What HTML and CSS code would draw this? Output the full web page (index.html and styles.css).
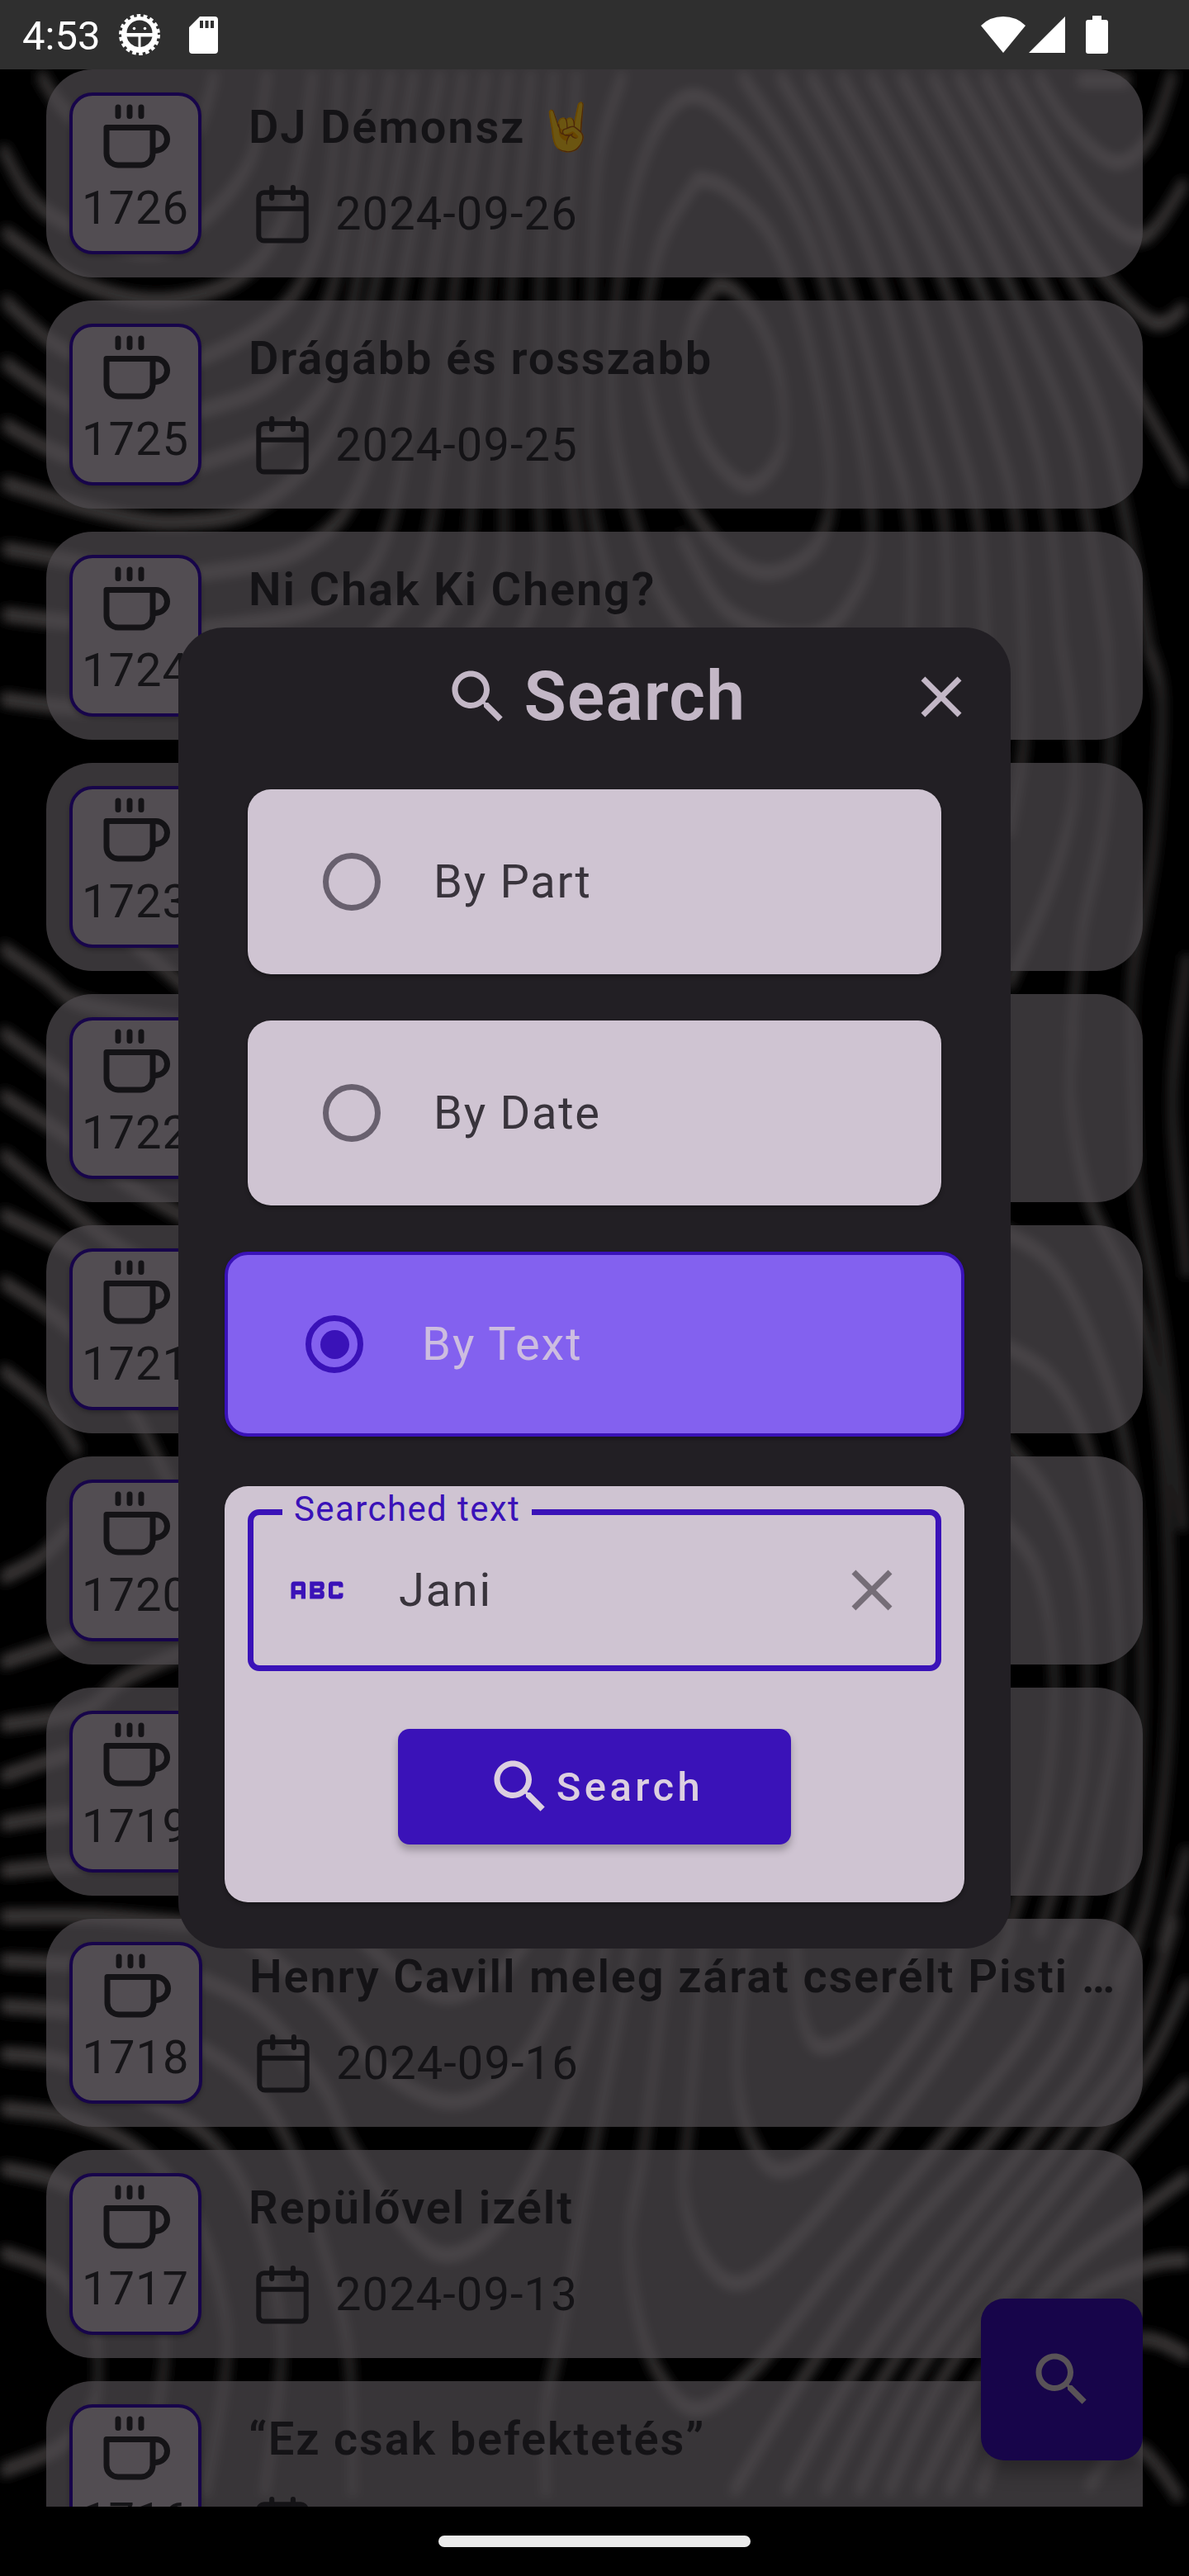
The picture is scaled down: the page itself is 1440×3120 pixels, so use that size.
FILE: index.html
```html
<!DOCTYPE html>
<html lang="hu">
<head>
<meta charset="utf-8">
<title>Search</title>
<link rel="stylesheet" href="styles.css">
</head>
<body>
<svg class="defs" width="0" height="0">
  <symbol id="cup" viewBox="0 0 24 24"><path d="M18 9h1a4 4 0 0 1 0 8h-1M2 9h16v9a4 4 0 0 1-4 4H6a4 4 0 0 1-4-4V9zM6 2v3M10 2v3M14 2v3" fill="none" stroke="currentColor" stroke-width="2" stroke-linecap="round" stroke-linejoin="round"/></symbol>
  <symbol id="calendar" viewBox="0 0 24 24"><rect x="3.8" y="4.6" width="16.4" height="16.7" rx="1.9" fill="none" stroke="currentColor" stroke-width="1.7"/><path d="M4 10.2h16M8.35 2.9v3.7M15.7 2.9v3.7" fill="none" stroke="currentColor" stroke-width="1.75" stroke-linecap="round"/></symbol>
  <symbol id="search" viewBox="0 0 24 24"><path fill="currentColor" d="M15.5 14h-.79l-.28-.27C15.41 12.59 16 11.11 16 9.5 16 5.91 13.09 3 9.5 3S3 5.91 3 9.5 5.91 16 9.5 16c1.61 0 3.09-.59 4.23-1.57l.27.28v.79l5 4.99L20.49 19l-4.99-5zm-6 0C7.01 14 5 11.99 5 9.5S7.01 5 9.5 5 14 7.01 14 9.5 11.99 14 9.5 14z"/></symbol>
  <symbol id="close" viewBox="0 0 24 24"><path fill="currentColor" d="M19 6.41L17.59 5 12 10.59 6.41 5 5 6.41 10.59 12 5 17.59 6.41 19 12 13.41 17.59 19 19 17.59 13.41 12z"/></symbol>
  <symbol id="abc" viewBox="0 0 24 24"><path fill="currentColor" fill-rule="evenodd" d="M21 11h-1.5v-.5h-2v3h2V13H21v1c0 .55-.45 1-1 1h-3c-.55 0-1-.45-1-1v-4c0-.55.45-1 1-1h3c.55 0 1 .45 1 1v1zM8 10v5H6.5v-1.5h-2V15H3v-5c0-.55.45-1 1-1h3c.55 0 1 .45 1 1zm-1.500.5h-2V12h2v-1.500zm7 1.500c.55 0 1 .45 1 1v1c0 .55-.45 1-1 1h-4V9h4c.55 0 1 .45 1 1v1c0 .55-.45 1-1 1zM11 10.500v.75h2v-.75h-2zm2 2.250h-2v.75h2v-.75z"/></symbol>
</svg>

<div class="screen">
  <svg class="contours" viewBox="0 0 1440 3120">
    <defs><filter id="soft" filterUnits="userSpaceOnUse" x="-40" y="40" width="1520" height="3040"><feMorphology operator="dilate" radius="0 6"/><feGaussianBlur stdDeviation="6.5 5.5"/></filter></defs>
    <g id="lines" filter="url(#soft)"></g>
  </svg>

  <header class="status">
    <span class="clock">4:53</span>
    <svg class="bug" viewBox="0 0 50 50"><circle cx="25" cy="25" r="22.500" fill="none" stroke="#fff" stroke-width="5" stroke-dasharray="4.500 3.354"/><path fill="#fff" fill-rule="evenodd" d="M25 3a22 22 0 1 0 0 44a22 22 0 0 0 0-44zM9.500 23a15.500 15.500 0 0 1 31 0zM9.500 27.500h14V40a15.500 15.500 0 0 1-14-12.500zM26.500 27.500h14a15.500 15.500 0 0 1-14 12.500z"/><circle cx="18.500" cy="17.500" r="1.800" fill="#fff"/><circle cx="31.500" cy="17.500" r="1.800" fill="#fff"/></svg>
    <svg class="sd" viewBox="0 0 35 45"><path fill="#fff" fill-rule="evenodd" d="M13 0h18a4 4 0 0 1 4 4v37a4 4 0 0 1-4 4H4a4 4 0 0 1-4-4V13zM13 5v9h4V5zM19.500 5v9h4V5zM26 5v9h4V5z"/></svg>
    <svg class="wifi" viewBox="0 0 54 44"><path fill="#fff" d="M27 44L0 11Q11 0 27 0T54 11z"/></svg>
    <svg class="signal" viewBox="0 0 44 44"><path fill="#fff" d="M44 0v44H0z"/></svg>
    <svg class="battery" viewBox="0 0 27 46"><path fill="#fff" d="M8 0h11v5h5a3 3 0 0 1 3 3v35a3 3 0 0 1-3 3H3a3 3 0 0 1-3-3V8a3 3 0 0 1 3-3h5z"/></svg>
  </header>

  <main class="list">
    <article class="card"><div class="badge"><svg><use href="#cup"/></svg><span>1726</span></div><div class="info"><h2>DJ Démonsz <span class="emoji">🤘</span></h2><p><svg><use href="#calendar"/></svg>2024-09-26</p></div></article>
    <article class="card"><div class="badge"><svg><use href="#cup"/></svg><span>1725</span></div><div class="info"><h2>Drágább és rosszabb</h2><p><svg><use href="#calendar"/></svg>2024-09-25</p></div></article>
    <article class="card"><div class="badge"><svg><use href="#cup"/></svg><span>1724</span></div><div class="info"><h2>Ni Chak Ki Cheng?</h2></div></article>
    <article class="card"><div class="badge"><svg><use href="#cup"/></svg><span>1723</span></div></article>
    <article class="card"><div class="badge"><svg><use href="#cup"/></svg><span>1722</span></div></article>
    <article class="card"><div class="badge"><svg><use href="#cup"/></svg><span>1721</span></div></article>
    <article class="card"><div class="badge"><svg><use href="#cup"/></svg><span>1720</span></div></article>
    <article class="card"><div class="badge"><svg><use href="#cup"/></svg><span>1719</span></div></article>
    <article class="card"><div class="badge wide"><svg><use href="#cup"/></svg><span>1718</span></div><div class="info"><h2>Henry Cavill meleg zárat cserélt Pisti …</h2><p><svg><use href="#calendar"/></svg>2024-09-16</p></div></article>
    <article class="card"><div class="badge"><svg><use href="#cup"/></svg><span>1717</span></div><div class="info"><h2>Repülővel izélt</h2><p><svg><use href="#calendar"/></svg>2024-09-13</p></div></article>
    <article class="card"><div class="badge"><svg><use href="#cup"/></svg><span>1716</span></div><div class="info"><h2>“Ez csak befektetés”</h2><p><svg><use href="#calendar"/></svg></p></div></article>
  </main>

  <button class="fab"><svg><use href="#search"/></svg></button>

  <footer class="nav"><i></i></footer>

  <section class="dialog">
    <div class="head"><i></i><h1><svg><use href="#search"/></svg>Search</h1><svg><use href="#close"/></svg></div>
    <div class="option"><i class="radio"></i>By Part</div>
    <div class="option"><i class="radio"></i>By Date</div>
    <div class="option selected"><i class="radio"></i>By Text</div>
    <div class="panel">
      <div class="field"><span class="label">Searched text</span><svg class="abc"><use href="#abc"/></svg><span class="value">Jani</span><svg class="clear"><use href="#close"/></svg></div>
      <button class="submit"><svg><use href="#search"/></svg>Search</button>
    </div>
  </section>
</div>
<script src="contours.js"></script>
</body>
</html>
```
FILE: styles.css
```css
* { box-sizing: border-box; margin: 0; padding: 0; }
body { background: #000; font-family: Roboto, "Liberation Sans", sans-serif; }
.defs { position: absolute; }
svg { display: block; flex: none; }
button { border: 0; font: inherit; }

.screen { position: relative; width: 1440px; height: 3120px; overflow: hidden; background: #000; display: flex; flex-direction: column; }
.contours { position: absolute; inset: 0; width: 1440px; height: 3120px; }
.contours path { fill: none; stroke: #343333; stroke-width: 8; stroke-linecap: round; }

.status { position: relative; height: 84px; flex: none; background: #2f2f2f; display: flex; align-items: center; padding: 0 98px 0 27px; }
.clock { font-size: 49px; line-height: 84px; color: #fff; width: 117px; padding-top: 3px; }
.bug { width: 50px; height: 50px; }
.sd { width: 35px; height: 45px; margin-left: 35px; }
.wifi { width: 54px; height: 44px; margin-left: auto; }
.signal { width: 44px; height: 44px; margin-left: 4px; }
.battery { width: 27px; height: 46px; margin-left: 25px; }

.list { position: relative; height: 2952px; flex: none; overflow: hidden; padding: 0 56px; display: flex; flex-direction: column; gap: 28px; }
.card { height: 252px; flex: none; border-radius: 56px; background: rgba(80, 76, 80, .7); padding: 28px; display: flex; gap: 56px; color: #141316; }
.badge { width: 160px; height: 196px; flex: none; border: 4px solid #17054a; border-radius: 28px; background: #524d52; padding-top: 6.5px; display: flex; flex-direction: column; align-items: center; gap: 3px; box-shadow: 0 3px 5px rgba(0, 0, 0, .25); }
.badge.wide { width: 161px; }
.badge svg, .info svg { width: 84px; height: 84px; }
.badge span { font-size: 56px; line-height: 84px; letter-spacing: 1px; color: #151417; }
.info { display: flex; flex-direction: column; gap: 21px; min-width: 0; white-space: nowrap; }
.info h2 { font-size: 56px; line-height: 84px; height: 84px; font-weight: 600; letter-spacing: 1.82px; padding-left: 1px; }
.info p { font-size: 56px; line-height: 84px; letter-spacing: 1.1px; display: flex; gap: 22px; }
.emoji { filter: brightness(.42); font-family: "Noto Color Emoji", Roboto, sans-serif; }

.fab { position: absolute; left: 1188px; top: 2784px; width: 196px; height: 196px; border-radius: 28px; background: #17054a; color: #595357; display: grid; place-items: center; box-shadow: 0 12px 24px rgba(0, 0, 0, .3); }
.fab svg { width: 84px; height: 84px; }

.nav { position: relative; height: 84px; flex: none; background: #000; display: grid; place-items: center; }
.nav i { width: 378px; height: 14px; border-radius: 7px; background: #ebebeb; }

.dialog { position: absolute; left: 216px; top: 760px; width: 1008px; height: 1600px; border-radius: 56px; background: #221f24; display: flex; flex-direction: column; align-items: center; }
.head { width: 100%; height: 168px; margin-bottom: 28px; padding: 0 42px; display: grid; grid-template-columns: 84px 1fr 84px; align-items: center; color: #c3b7c6; }
.head svg { width: 84px; height: 84px; }
.head h1 { display: flex; justify-content: center; align-items: center; gap: 14px; font-size: 84px; line-height: 112px; font-weight: 600; letter-spacing: 1.2px; }
.option { width: 840px; height: 224px; margin-bottom: 56px; border-radius: 28px; background: #cfc4d2; color: #39343c; display: flex; align-items: center; gap: 64px; padding-left: 91px; font-size: 56px; letter-spacing: 1.75px; box-shadow: 0 3px 5px rgba(0, 0, 0, .3); }
.radio { width: 70px; height: 70px; border: 7px solid #68606e; border-radius: 50%; display: grid; place-items: center; }
.selected { width: 896px; margin-bottom: 60px; border: 4px solid #3a12b8; background: #8361ef; color: #cdbde0; padding-left: 94px; gap: 71px; letter-spacing: 2px; }
.selected .radio { border-color: #3a12b8; }
.selected .radio::after { content: ""; width: 35px; height: 35px; border-radius: 50%; background: #3a12b8; }

.panel { width: 896px; height: 504px; border-radius: 28px; background: #cfc4d2; padding: 28px; display: flex; flex-direction: column; align-items: center; gap: 70px; box-shadow: 0 3px 5px rgba(0, 0, 0, .3); }
.field { position: relative; width: 840px; height: 196px; border: 7px solid #3a12b8; border-radius: 14px; padding: 0 35px; display: flex; align-items: center; }
.field svg { width: 84px; height: 84px; }
.label { position: absolute; left: 35px; top: -32px; padding: 0 14px; background: #cfc4d2; color: #3a12b8; font-size: 42px; line-height: 49px; letter-spacing: 1.4px; white-space: nowrap; }
.abc { color: #3a12b8; }
.value { margin-left: 57px; font-size: 56px; letter-spacing: 1.75px; color: #39343c; flex: 1; }
.clear { color: #756d77; }
.submit { width: 476px; height: 140px; border-radius: 14px; background: #3a12b8; color: #dccfe0; display: flex; align-items: center; justify-content: center; gap: 2px; font-size: 49px; font-weight: 500; letter-spacing: 4.4px; box-shadow: 0 7px 10px rgba(0, 0, 0, .25); }
.submit svg { width: 84px; height: 84px; }
```
FILE: contours.js
```js
// Topographic wallpaper: each entry is a flat list x1,y1,x2,y2... of points a smooth line runs through.
const fields = [
  { sx: 0.9184, sy: 0.4401, dy: 80, lines: [
    [55,25, 90,130, 175,260, 250,190, 270,120, 282,25],
    [5,235, 60,400, 190,510, 265,430, 330,260, 352,25],
    [8,460, 100,590, 205,645, 310,590, 370,440, 400,200, 412,25],
    [8,650, 80,775, 170,830, 270,800, 380,650, 430,400, 447,25],
    [8,820, 90,930, 180,965, 270,945, 370,850, 440,600, 480,25],
    [8,990, 90,1075, 190,1110, 280,1085, 400,960, 460,700, 515,25],
    [8,1150, 130,1225, 230,1255, 340,1210, 440,1000, 495,600, 545,25],
    [8,1330, 90,1360, 190,1400, 270,1395, 400,1330, 480,1120, 530,600, 580,25],
    [8,1510, 90,1530, 200,1550, 300,1540, 430,1480, 510,1290, 560,700, 610,25],
    [480,1600, 550,1400, 580,1100, 600,600, 640,25],
    [550,1600, 610,1400, 625,1100, 640,600, 670,25],
    [610,1600, 660,1400, 665,1100, 675,600, 700,25],
    [680,1600, 712,1400, 710,1100, 712,600, 730,25],
    [750,1600, 770,1450, 750,1100, 745,600, 760,25],
    [830,1600, 800,1400, 775,1100, 780,600, 790,250, 820,25],
    [920,1600, 860,1400, 810,1000, 815,600, 850,250, 905,85, 970,160, 1050,400, 1100,700, 1150,1250, 1120,1480, 1060,1570, 960,1500, 900,1300],
    [920,310, 870,500, 850,800, 880,1080, 940,1300, 1010,1395, 1080,1310, 1095,1100, 1065,750, 1020,480, 960,340, 920,310],
    [945,600, 915,700, 905,850, 930,1040, 985,1155, 1030,1060, 1030,880, 1005,720, 970,620, 945,600],
    [980,25, 1060,300, 1120,620, 1170,1000, 1200,1250, 1200,1600],
    [1030,25, 1110,330, 1165,620, 1215,1000, 1245,1250, 1250,1600],
    [1070,25, 1150,340, 1205,620, 1260,1000, 1290,1250, 1300,1600],
    [1110,25, 1190,340, 1250,620, 1310,1000, 1340,1250, 1350,1600],
    [1150,25, 1230,340, 1295,620, 1360,1000, 1385,1250, 1400,1600],
    [1190,25, 1270,340, 1335,620, 1410,1000, 1435,1250, 1460,1600],
    [1230,25, 1310,340, 1380,620, 1450,950, 1485,1250, 1515,1600],
    [1265,25, 1340,310, 1430,640, 1500,900, 1562,1130],
    [1300,25, 1370,300, 1450,560, 1520,705, 1560,670],
    [1335,25, 1400,260, 1460,420, 1510,470, 1560,330],
    [1370,25, 1410,160, 1470,265, 1515,200, 1545,25],
    [1425,40, 1485,40]
  ]},
  { sx: 1, sy: 1, dy: 0, lines: [
    [5,847, 110,858, 260,850],
    [5,1150, 55,1185, 100,1216, 230,1240],
    [160,1140, 230,1200],
    [5,1252, 83,1307, 150,1350, 240,1370],
    [5,1328, 83,1378, 150,1431, 230,1478],
    [5,1400, 67,1450, 133,1503, 230,1560],
    [5,1472, 83,1512, 150,1560, 240,1600],
    [5,1554, 83,1608, 150,1690, 193,1771, 230,1850],
    [5,1661, 57,1704, 93,1756],
    [5,1910, 50,1886, 85,1850],
    [5,2013, 83,1986, 150,1950, 230,1890],
    [5,2089, 100,2072, 150,2034, 230,1998],
    [5,2151, 83,2125, 230,2080],
    [5,2209, 83,2197, 240,2180],
    [5,2266, 83,2259, 240,2250],
    [5,2321, 110,2321, 230,2330],
    [5,2375, 83,2378, 180,2382, 248,2399, 321,2441, 390,2525, 427,2603, 496,2703, 546,2731, 606,2692, 661,2593, 710,2457, 735,2330],
    [5,2430, 83,2436, 170,2452, 248,2483, 312,2535, 358,2614, 390,2718, 422,2849, 427,3015],
    [5,2488, 83,2499, 193,2551, 257,2593, 303,2666, 335,2780, 340,2870, 321,3015],
    [5,2554, 92,2567, 174,2609, 239,2692, 271,2797, 273,2875, 250,3015],
    [5,2627, 83,2648, 150,2710, 190,2790, 199,2860, 180,2980],
    [5,2729, 69,2755, 110,2810, 119,2870, 110,2920, 70,2965, 5,2992],
    [290,2340, 386,2420, 459,2504, 546,2546, 620,2509, 680,2405, 700,2330],
    [430,2340, 490,2395, 546,2418, 610,2385, 650,2330],
    [661,3015, 661,2920, 680,2823, 707,2666, 735,2520, 770,2340],
    [812,2340, 780,2600, 763,2700, 770,2790, 795,2870, 844,2918, 917,2865, 1018,2739, 1133,2603, 1248,2457, 1294,2340],
    [853,2340, 835,2562, 828,2656, 853,2734, 899,2765, 972,2703, 1087,2562, 1179,2431, 1225,2340],
    [904,2340, 893,2509, 913,2598, 950,2629, 1018,2582, 1133,2431, 1165,2340],
    [963,2340, 972,2445, 1000,2480, 1064,2436, 1119,2340],
    [890,3015, 973,2880, 1087,2718, 1200,2590, 1290,2470, 1340,2340],
    [954,3015, 1030,2880, 1130,2740, 1250,2590, 1330,2480, 1380,2340],
    [1000,3015, 1070,2880, 1170,2740, 1290,2590, 1370,2480, 1422,2330],
    [1041,3015, 1110,2875, 1210,2740, 1320,2600, 1390,2500, 1437,2405],
    [1078,3015, 1145,2875, 1250,2740, 1360,2610, 1437,2525],
    [1115,3015, 1180,2890, 1280,2760, 1380,2680, 1437,2638],
    [1150,3015, 1210,2900, 1300,2790, 1386,2745, 1437,2737],
    [1188,3015, 1230,2920, 1310,2850, 1386,2833, 1437,2852],
    [1320,3010, 1350,2970, 1386,2970, 1427,3022],
    [1391,784, 1407,850, 1400,1000, 1387,1094, 1370,1208, 1375,1400, 1380,1461, 1410,1633, 1432,1845],
    [1223,1190, 1273,1071, 1300,967, 1298,870, 1286,784],
    [1223,1005, 1240,900, 1240,784],
    [1300,1250, 1297,1335, 1320,1455, 1370,1560, 1400,1680, 1415,1863, 1415,2100, 1390,2300, 1350,2400],
    [1341,784, 1345,900, 1335,1010, 1310,1130, 1298,1250],
    [1437,1165, 1420,1335, 1437,1538],
    [1437,2245, 1407,2357],
    [1200,1485, 1273,1530, 1327,1633, 1370,1790, 1383,2035, 1370,2240, 1330,2400],
    [1200,1622, 1273,1668, 1320,1760, 1350,1920, 1350,2100, 1300,2340],
    [1200,1730, 1273,1817, 1313,1943, 1310,2150, 1260,2340],
    [1200,1830, 1255,1900, 1277,2035, 1262,2200, 1220,2340]
  ]}
];

const NS = "http://www.w3.org/2000/svg";
const layer = document.getElementById("lines");
for (const f of fields) {
  for (const flat of f.lines) {
    const p = [];
    for (let i = 0; i < flat.length; i += 2) p.push([flat[i] * f.sx, Math.max(94, flat[i + 1] * f.sy + f.dy)]);
    let d = `M${p[0]}`;
    for (let i = 0; i < p.length - 1; i++) {
      const a = p[i - 1] || p[i], b = p[i], c = p[i + 1], e = p[i + 2] || c;
      d += `C${b[0] + (c[0] - a[0]) / 6} ${b[1] + (c[1] - a[1]) / 6} ${c[0] - (e[0] - b[0]) / 6} ${c[1] - (e[1] - b[1]) / 6} ${c}`;
    }
    const path = document.createElementNS(NS, "path");
    path.setAttribute("d", d);
    layer.append(path);
  }
}
```
